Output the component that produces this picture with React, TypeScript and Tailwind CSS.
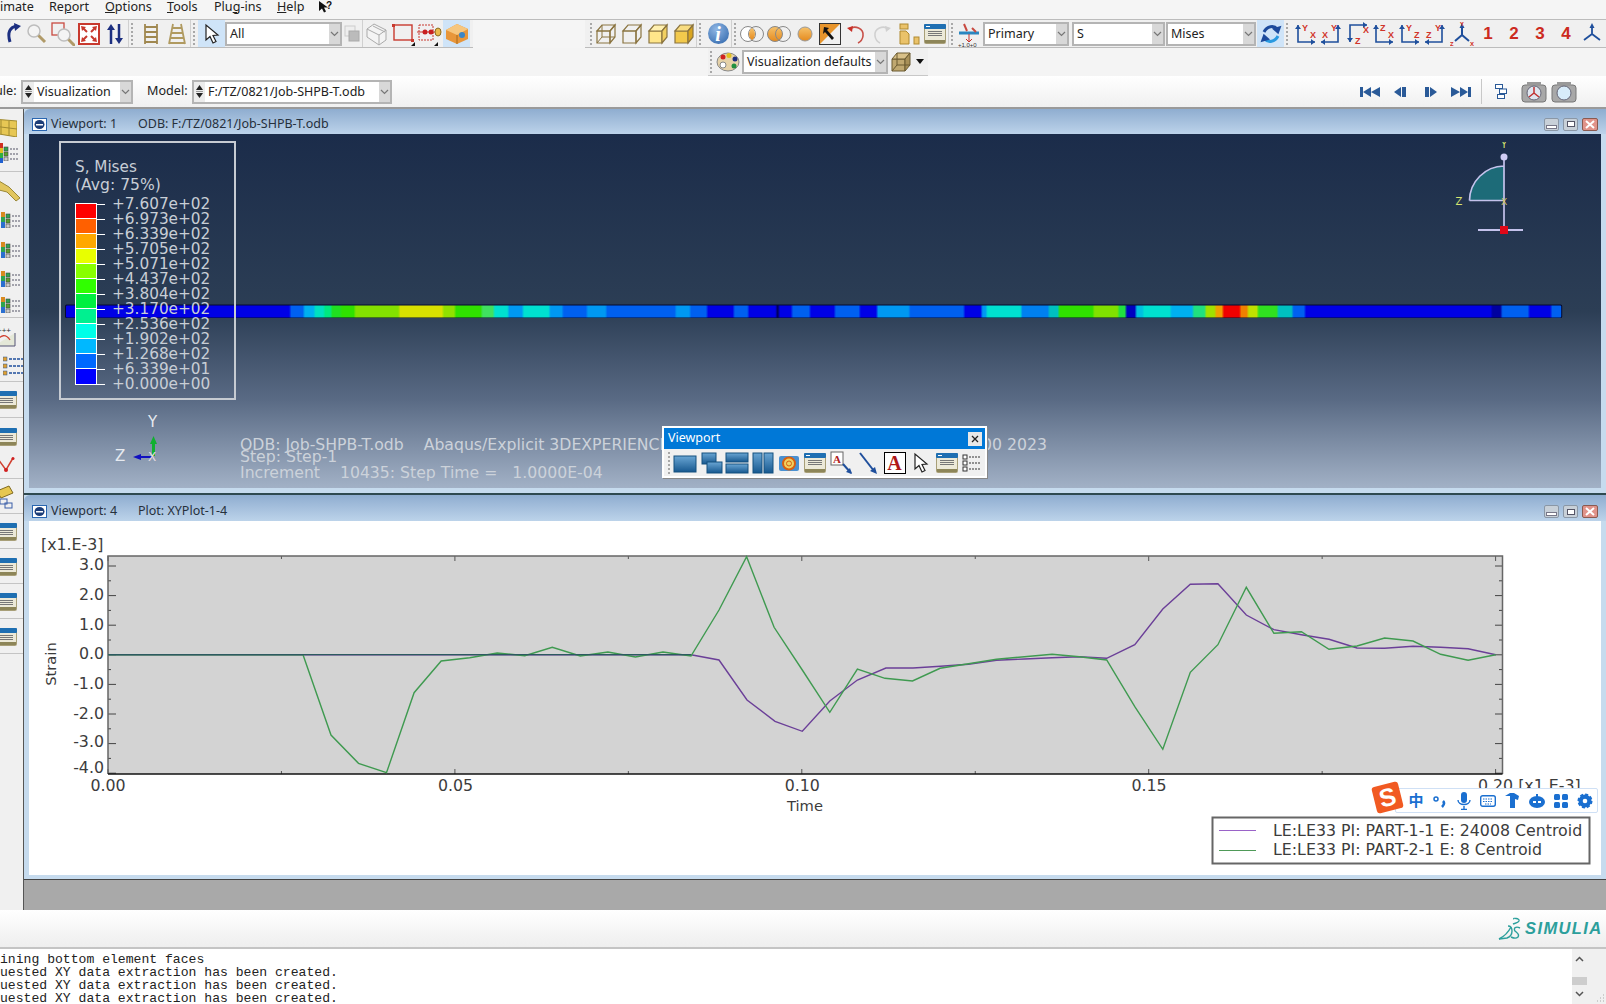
import React from "react";

const Svg = ({ w = 24, h = 24, children, className = "" }: { w?: number; h?: number; children?: React.ReactNode; className?: string }) => (
  <svg width={w} height={h} viewBox={`0 0 ${w} ${h}`} className={`shrink-0 ${className}`}>{children}</svg>
);

const Slot = ({ w = 26, children }: { w?: number; children?: React.ReactNode }) => (
  <div className="flex h-full shrink-0 items-center justify-center" style={{ width: w }}>{children}</div>
);

const Grip = () => (
  <div className="flex h-full w-[5px] shrink-0 flex-col items-center justify-center gap-[2px]">
    {[0, 1, 2, 3, 4, 5].map((i) => <span key={i} className="h-[2px] w-[2px] bg-[#a8a8a8]" />)}
  </div>
);
const Sep = () => <div className="h-full w-px shrink-0 bg-[#d0d0d0]" />;

const Combo = ({ w, text, spin = false }: { w: number; text: string; spin?: boolean }) => (
  <div className="flex h-[24px] shrink-0 items-stretch border-2 border-[#b4b4b4] bg-white" style={{ width: w }}>
    {spin && (
      <div className="flex w-[11px] shrink-0 flex-col items-center justify-center gap-[1px] bg-[#ececec]">
        <Svg w={7} h={5}><path d="M3.5 0L7 5H0z" fill="#222" /></Svg>
        <div className="h-px w-[7px] bg-[#999]" />
        <Svg w={7} h={5}><path d="M0 0h7L3.5 5z" fill="#222" /></Svg>
      </div>
    )}
    <span className="min-w-0 flex-1 truncate pl-[3px] text-[12.5px] leading-[20px] text-[#222]">{text}</span>
    <div className="flex w-[11px] shrink-0 items-center justify-center bg-[#d8d8d8]">
      <Svg w={9} h={6}><path d="M1 1l3.5 3.5L8 1" fill="none" stroke="#777" strokeWidth="1.2" /></Svg>
    </div>
  </div>
);

const Table = ({ w = 22, h = 18 }: { w?: number; h?: number }) => (
  <Svg w={w} h={h}>
    <rect x="0.5" y="0.5" width={w - 1} height={h - 1} rx="1" fill="#ece9d8" stroke="#a89f78" />
    <rect x="0" y="0" width={w} height="5" rx="1" fill="#1f6fb2" />
    <rect x="2" y="2" width="4" height="1" fill="#fff" />
    {[7, 9, 11].map((y) => <rect key={y} x={4} y={y} width={w - 8} height="1" fill="#777" />)}
    <rect x="1" y={h - 4} width={w - 2} height="3" fill="#8d8558" />
  </Svg>
);

const Magnifier = ({ x = 0, y = 0 }: { x?: number; y?: number }) => (
  <g transform={`translate(${x} ${y})`}>
    <circle cx="8" cy="8" r="6" fill="#f4f4f4" stroke="#bdbdbd" strokeWidth="1.5" />
    <path d="M12.5 12.5L19 19" stroke="#b09a68" strokeWidth="3" />
  </g>
);

const Cube = ({ mode }: { mode: "wire" | "hidden" | "shade" | "solid" }) => {
  const s = "#8a7440";
  const f = mode === "shade" ? "#ffe68a" : mode === "solid" ? "#f2c94c" : "none";
  const t = mode === "shade" ? "#fff0b0" : mode === "solid" ? "#f8dc80" : "none";
  const r = mode === "shade" ? "#f2d060" : mode === "solid" ? "#d9a520" : "none";
  return (
    <Svg w={22} h={22}>
      <path d="M2 8h13v12H2z" fill={f} stroke={s} strokeWidth="1.2" />
      <path d="M2 8l5-6h13l-5 6z" fill={t} stroke={s} strokeWidth="1.2" />
      <path d="M15 8l5-6v12l-5 6z" fill={r} stroke={s} strokeWidth="1.2" />
      {mode === "wire" && <path d="M7 2v12h13M7 14l-5 6" fill="none" stroke={s} strokeWidth="1" />}
    </Svg>
  );
};

const Circles = ({ a = false, b = false }: { a?: boolean; b?: boolean }) => (
  <Svg w={26} h={18}>
    <defs>
      <linearGradient id="og" x1="0" y1="0" x2="0" y2="1"><stop offset="0" stopColor="#f6c26b" /><stop offset="1" stopColor="#e58a1e" /></linearGradient>
    </defs>
    <circle cx="9" cy="9" r="7.5" fill={a ? "url(#og)" : "#fff"} stroke="#888" />
    <circle cx="17" cy="9" r="7.5" fill={b ? "url(#og)" : "none"} stroke="#888" />
    {!a && !b && <path d="M13 3a7.5 7.5 0 010 12a7.5 7.5 0 010-12z" fill="url(#og)" />}
  </Svg>
);

const Axis = ({ a, b, mirror = false, down = false }: { a: string; b: string; mirror?: boolean; down?: boolean }) => {
  const vx = mirror ? 18 : 4;
  const ex = mirror ? 1 : 21;
  const top = 3;
  const bot = 20;
  const hy = down ? top : bot;
  const vy = down ? bot : top;
  const hd = mirror ? 1 : -1;
  const vd = down ? -1 : 1;
  return (
    <Svg w={24} h={24}>
      <path d={`M${vx} ${vy}V${hy}H${ex}`} fill="none" stroke="#1f4f9c" strokeWidth="1.6" />
      <path d={`M${vx - 3} ${vy + 4 * vd}L${vx} ${vy}L${vx + 3} ${vy + 4 * vd}z`} fill="#1f4f9c" />
      <path d={`M${ex + 4 * hd} ${hy - 3}L${ex} ${hy}L${ex + 4 * hd} ${hy + 3}z`} fill="#1f4f9c" />
      <text x={down ? 9 : mirror ? 11 : 8} y={down ? 22 : 9} fontSize="9" fontWeight="700" fill="#d0342a" fontFamily="Liberation Sans">{a}</text>
      <text x={mirror ? 2 : down ? 17 : 16} y={down ? 11 : 16} fontSize="9" fontWeight="700" fill="#d0342a" fontFamily="Liberation Sans">{b}</text>
    </Svg>
  );
};

const Tri = ({ size = 24 }: { size?: number }) => (
  <Svg w={size} h={size} className="overflow-visible">
    <path d="M12 12V3M12 12L4 18M12 12l8 6" stroke="#1f4f9c" strokeWidth="1.8" fill="none" />
    <path d="M9.5 6L12 1l2.5 5z" fill="#1f4f9c" />
  </Svg>
);

const Num = ({ n }: { n: string }) => (
  <Slot w={26}><span className="font-['Liberation_Sans'] text-[17px] font-bold text-[#cc2a20]">{n}</span></Slot>
);

const WinBtns = () => (
  <div className="flex items-center gap-[4px]">
    <div className="flex h-[13px] w-[15px] items-end justify-center rounded-[2px] border border-[#8a97a6] bg-[#c8d0d8] pb-[2px]"><span className="h-[2px] w-[9px] bg-[#fff] outline outline-1 outline-[#778]" /></div>
    <div className="flex h-[13px] w-[15px] items-center justify-center rounded-[2px] border border-[#8a97a6] bg-[#c8d0d8]"><span className="h-[6px] w-[8px] border border-[#556] bg-white" /></div>
    <div className="flex h-[13px] w-[16px] items-center justify-center rounded-[2px] border border-[#8a5a50] bg-[#e0938a]">
      <Svg w={10} h={9}><path d="M1 1l8 7M9 1L1 8" stroke="#fff" strokeWidth="2" /></Svg>
    </div>
  </div>
);

const TitleIcon = () => (
  <div className="flex h-[13px] w-[15px] shrink-0 items-center justify-center border border-[#2a66b0] bg-white">
    <Svg w={11} h={9}><ellipse cx="5.5" cy="4.5" rx="5" ry="4.5" fill="#1c3d78" /><rect x="2" y="4" width="7" height="1.5" fill="#fff" /></Svg>
  </div>
);

const TitleBar = ({ a, b, h, pt }: { a: string; b: string; h: number; pt: number }) => (
  <div className="flex shrink-0 items-center rounded-tl-[6px] bg-[linear-gradient(180deg,#8fadd0,#bcd3ea)] pr-[8px] pl-[8px] text-[12.5px] text-[#26303c]" style={{ height: h, paddingTop: pt }}>
    <TitleIcon />
    <span className="ml-[4px] w-[87px] shrink-0">{a}</span>
    <span className="flex-1">{b}</span>
    <WinBtns />
  </div>
);

const Cursor = () => (
  <Svg w={18} h={22}><path d="M3 2l0 15 4-3.5 3 6.5 3-1.5-3-6 5-.5z" fill="#fff" stroke="#222" strokeWidth="1.2" /></Svg>
);

const LegendMini = ({ colors = ["#2ea44f", "#5aa02c", "#ccc"] }: { colors?: string[] }) => (
  <Svg w={16} h={16}>
    {colors.map((c, i) => (
      <g key={i}>
        <rect x="1" y={2 + i * 5} width="4" height="4" fill={c} stroke="#444" strokeWidth=".6" />
        <path d={`M7 ${4 + i * 5}h8`} stroke="#556" strokeDasharray="2 1" />
      </g>
    ))}
  </Svg>
);

const YellowPart = () => (
  <Svg w={24} h={24}><path d="M0 3l10 6 11 11-4 3-9-9L0 12z" fill="#e2c65e" stroke="#9a8838" /></Svg>
);

const LeftIcon = ({ kind }: { kind: string }) => {
  if (kind === "table") return <div className="mr-[6px] flex justify-end"><Table w={24} h={18} /></div>;
  if (kind === "grid")
    return (
      <div className="mr-[6px] flex justify-end">
        <Svg w={24} h={20}><path d="M0 2l24 2v16L0 16z" fill="#e7c754" stroke="#a08a30" /><path d="M8 3v14M16 4v15M0 9l24 3" stroke="#a08a30" /></Svg>
      </div>
    );
  if (kind === "part") return <div className="flex justify-end"><YellowPart /></div>;
  if (kind === "bars")
    return (
      <div className="mr-[2px] flex items-center justify-end">
        <Svg w={4} h={16}><rect width="4" height="5" fill="#d88a20" /><rect y="5" width="4" height="5" fill="#2ea44f" /><rect y="10" width="4" height="6" fill="#2a6fd0" /></Svg>
        <LegendMini />
      </div>
    );
  if (kind === "plot")
    return (
      <div className="mr-[6px] flex justify-end">
        <Svg w={24} h={22}><path d="M1 20h21V7" fill="#e4e8d8" stroke="#557" /><path d="M3 16c5-8 10-8 14-2" fill="none" stroke="#d04030" strokeWidth="1.3" /><text x="4" y="7" fontSize="8" fill="#333" fontFamily="Liberation Sans">+++</text></Svg>
      </div>
    );
  if (kind === "list")
    return (
      <div className="flex justify-end">
        <Svg w={20} h={22}>
          {[3, 10, 17].map((y) => (
            <g key={y}><rect x="0" y={y - 2} width="4" height="4" fill="#e0a030" stroke="#1f4f9c" strokeWidth=".5" /><path d={`M6 ${y}h14`} stroke="#1f4f9c" strokeWidth="1.5" strokeDasharray="3 1" /></g>
          ))}
        </Svg>
      </div>
    );
  if (kind === "vee")
    return (
      <div className="mr-[5px] flex justify-end">
        <Svg w={20} h={16}><path d="M0 2l8 11 7-12" fill="none" stroke="#d04030" strokeWidth="1.5" /><circle cx="8" cy="13" r="2" fill="#d02020" /><circle cx="0" cy="2" r="2" fill="#d02020" /><circle cx="15" cy="1.5" r="1.5" fill="#d02020" /></Svg>
      </div>
    );
  if (kind === "stack")
    return (
      <div className="mr-[6px] flex justify-end">
        <Svg w={20} h={24}><path d="M0 6l12-5 4 7-12 5z" fill="#e6c750" stroke="#806a20" /><rect x="3" y="14" width="7" height="5" fill="none" stroke="#3a5ea8" /><rect x="8" y="18" width="7" height="5" fill="none" stroke="#3a5ea8" /></Svg>
      </div>
    );
  if (kind === "color")
    return (
      <div className="mr-[4px] flex items-center justify-end">
        <Svg w={5} h={20}><rect width="5" height="5" fill="#d03020" /><rect y="5" width="5" height="5" fill="#e0c020" /><rect y="10" width="5" height="5" fill="#30b040" /><rect y="15" width="5" height="5" fill="#2060d0" /></Svg>
        <LegendMini />
      </div>
    );
  return null;
};

const sections: { h: number; pt: number; items: [string, number][] }[] = [
  { h: 63, pt: 3, items: [["grid", 30], ["color", 22]] },
  { h: 146, pt: 3, items: [["part", 30], ["bars", 30], ["bars", 30], ["bars", 27], ["bars", 26]] },
  { h: 64, pt: 4, items: [["plot", 30], ["list", 30]] },
  { h: 36, pt: 0, items: [["table", 36]] },
  { h: 61, pt: 4, items: [["table", 30], ["vee", 26]] },
  { h: 35, pt: 0, items: [["stack", 35]] },
  { h: 35, pt: 0, items: [["table", 35]] },
  { h: 35, pt: 0, items: [["table", 35]] },
  { h: 35, pt: 0, items: [["table", 35]] },
  { h: 35, pt: 0, items: [["table", 35]] },
];

const LeftBar = () => (
  <div className="flex h-full w-[23px] shrink-0 flex-col overflow-hidden bg-[#f0f0f0]">
    {sections.map((s, i) => (
      <div key={i} className="flex shrink-0 flex-col border-b border-[#c4c4c4]" style={{ height: s.h, paddingTop: s.pt }}>
        {s.items.map(([k, h], j) => (
          <div key={j} className="flex shrink-0 items-center justify-end" style={{ height: h }}><LeftIcon kind={k} /></div>
        ))}
      </div>
    ))}
  </div>
);

const legendValues = ["+7.607e+02", "+6.973e+02", "+6.339e+02", "+5.705e+02", "+5.071e+02", "+4.437e+02", "+3.804e+02", "+3.170e+02", "+2.536e+02", "+1.902e+02", "+1.268e+02", "+6.339e+01", "+0.000e+00"];
const legendColors = ["#ff0000", "#ff6000", "#ffa800", "#e8ff00", "#88ff00", "#30ff00", "#00f040", "#00f090", "#00ffe8", "#00b8ff", "#0068ff", "#0000ff"];

const ContourLegend = () => (
  <div className="absolute top-[7px] left-[30px] z-10 h-[259px] w-[177px] border-2 border-[#c6cbd2] pt-[15px] pl-[14px] font-['DejaVu_Sans'] text-[#c8ced6]">
    <div className="text-[15.2px] leading-[18px]">S, Mises</div>
    <div className="text-[15.6px] leading-[18px]">(Avg: 75%)</div>
    <div className="mt-[3px] flex">
      <div className="mt-[6px] flex w-[22px] shrink-0 flex-col self-start border border-white">
        {legendColors.map((c) => <div key={c} className="h-[15px] border-b border-white last:border-b-0" style={{ backgroundColor: c }} />)}
      </div>
      <div className="flex flex-col">
        {legendValues.map((v) => (
          <div key={v} className="flex h-[15.02px] items-center">
            <span className="h-px w-[8px] bg-white" />
            <span className="ml-[7px] text-[15.3px] leading-[15px]">{v}</span>
          </div>
        ))}
      </div>
    </div>
  </div>
);

const B = "#0000e6";
const M = "#0060f0";
const L = "#0098f2";
const C = "#00e0d0";
const seg1: [number, string][] = [[475, B], [503, M], [525, "#00b0f0"], [545, "#00e0c0"], [560, "#00e880"], [580, "#20e020"], [608, "#30e000"], [700, "#84e000"], [790, "#d8e000"], [815, "#90e000"], [870, "#30e000"], [895, "#40e060"], [925, C], [955, L], [1010, C], [1037, L], [1087, M], [1127, L], [1270, M], [1300, L], [1335, M], [1350, B], [1390, B], [1420, M], [1478, B], [1483, "#000060"], [1510, B], [1540, M], [1568, B]];
const seg2: [number, string][] = [[20, M], [70, B], [120, M], [155, B], [220, L], [240, M], [330, M], [365, B], [375, L], [445, C], [500, "#0080f0"], [520, "#00c0c0"], [590, "#30e000"], [640, "#80e000"], [655, "#20e040"], [675, "#0000c0"], [690, "#00c0e0"], [745, C], [790, "#00b0f0"], [815, "#20e080"], [835, "#a0e000"], [850, "#f0a000"], [885, "#f00000"], [900, "#f08000"], [920, "#c0e000"], [960, "#30e020"], [990, "#00c0c0"], [1015, M], [1390, B], [1410, "#0000a0"], [1465, M], [1510, B], [1530, M]];

const Strip = () => {
  const x0 = 66;
  const x1 = 800 + 1530 / 2.01;
  const stops: { o: number; c: string }[] = [];
  let prev = x0;
  const add = (x: number, c: string) => {
    if (x <= prev) return;
    const e = Math.min(1.2, (x - prev) / 2.5);
    stops.push({ o: (prev + e - x0) / (x1 - x0), c });
    stops.push({ o: (x - e - x0) / (x1 - x0), c });
    prev = x;
  };
  seg1.forEach(([e, c]) => add(Math.min(60 + e / 2.063, 800), c));
  seg2.forEach(([e, c]) => add(800 + e / 2.01, c));
  return (
    <svg className="absolute top-[169px] left-0" width={1572} height={18} viewBox="29 303 1572 18">
      <defs>
        <linearGradient id="stripG" x1="0" y1="0" x2="1" y2="0">
          {stops.map((s, i) => <stop key={i} offset={s.o} stopColor={s.c} />)}
        </linearGradient>
      </defs>
      <rect x="65" y="304.5" width={x1 - 65 + 1} height="13.5" fill="#050a30" rx="1.5" />
      <rect x={x0} y={305.5} width={x1 - x0} height={12} fill="url(#stripG)" rx="1" />
    </svg>
  );
};

const TopTriad = () => (
  <svg className="absolute top-[8px] left-[1419px]" width={90} height={100} viewBox="1448 142 90 100">
    <path d="M1504 200.500V166A35 35 0 001469.500 200.500z" fill="#1d6b78" />
    <path d="M1469.500 200.500A35 35 0 011504 166M1469.500 200.500H1504M1504 157V230" fill="none" stroke="#c4c2ec" strokeWidth="1.7" />
    <circle cx="1504" cy="157" r="3.500" fill="#d0ccf4" />
    <path d="M1478 230H1523" stroke="#c4c2ec" strokeWidth="2" />
    <rect x="1500" y="226" width="8" height="8" fill="#e00818" />
    <text x="1504" y="148" fontSize="10" textAnchor="middle" fill="#d8e470" fontFamily="DejaVu Sans">Y</text>
    <text x="1459" y="204.500" fontSize="10" textAnchor="middle" fill="#d8e470" fontFamily="DejaVu Sans">Z</text>
    <text x="1504" y="204.500" fontSize="9" textAnchor="middle" fill="#d8c860" fontFamily="DejaVu Sans">X</text>
  </svg>
);

const BottomTriad = () => (
  <svg className="absolute top-[272px] left-[79px]" width={70} height={60} viewBox="108 406 70 60">
    <text x="148" y="427" fontSize="15" fill="#e6eaf0" fontFamily="DejaVu Sans">Y</text>
    <text x="115" y="461" fontSize="15" fill="#e6eaf0" fontFamily="DejaVu Sans">Z</text>
    <path d="M153.5 456V442" stroke="#10b030" strokeWidth="3" />
    <path d="M150 444l3.5-8 3.5 8z" fill="#10b030" />
    <path d="M153 457H140" stroke="#1010c0" strokeWidth="2" />
    <path d="M141 454l-8 3 8 3z" fill="#1010c0" />
    <text x="148" y="461" fontSize="12" fill="#e8dce0" fontFamily="DejaVu Sans">X</text>
  </svg>
);

const z = (pts: [number, number][], x0: number) => pts.map(([x, y]) => [x0 + x * 0.4592, 550 + y / 3] as [number, number]);
const green = [
  ...z([[18, 314], [442, 314], [503, 555], [563, 640], [624, 668], [684, 428], [743, 333], [805, 323], [865, 309], [925, 317], [985, 292], [1046, 318], [1106, 306], [1166, 321], [1226, 306], [1287, 318], [1348, 180], [1408, 20], [1468, 232]], 100),
  ...z([[5, 360], [65, 487], [125, 357], [185, 385], [245, 393], [305, 355], [367, 341], [428, 328], [489, 320], [549, 313], [608, 320], [668, 330], [729, 470], [790, 598], [850, 367], [910, 284], [972, 112], [1032, 250], [1092, 245], [1152, 298], [1213, 288], [1273, 264], [1335, 273], [1395, 313], [1455, 331], [1515, 314]], 800),
];
const purple = [
  ...z([[18, 314], [1287, 314], [1348, 330], [1409, 450], [1470, 514]], 100),
  ...z([[5, 544], [65, 453], [125, 390], [187, 354], [246, 354], [306, 349], [367, 343], [428, 331], [489, 327], [549, 323], [608, 320], [668, 325], [729, 284], [790, 177], [850, 103], [910, 101], [972, 195], [1032, 239], [1092, 254], [1152, 268], [1213, 294], [1273, 295], [1335, 289], [1395, 292], [1455, 296], [1515, 314]], 800),
];
const pl = (p: [number, number][]) => p.map(([x, y]) => `${x.toFixed(1)},${y.toFixed(1)}`).join(" ");

const yLabels: [string, number][] = [["3.0", 564], ["2.0", 594], ["1.0", 624], ["0.0", 653], ["-1.0", 683], ["-2.0", 713], ["-3.0", 741.5], ["-4.0", 767]];
const xMajor = [108, 455.6, 802.3, 1149, 1495.6];
const txt = "#3c3c3c";

const Chart = () => {
  const xt: number[] = [];
  for (let i = 0; i <= 8; i++) xt.push(108 + i * 173.45);
  const yt: number[] = [];
  for (let i = 0; i <= 14; i++) yt.push(566 + i * 14.8);
  return (
    <svg className="block h-[354px] w-full" viewBox="29 521 1572 354" fontFamily="DejaVu Sans" fontSize="15.8" fill={txt}>
      <rect x="108" y="556" width="1394.5" height="218" fill="#d3d3d3" />
      {xt.map((x, i) => (
        <g key={x} stroke="#555" strokeWidth="1">
          <path d={`M${x} 556v${i % 2 ? 3 : 5}M${x} 774v-${i % 2 ? 3 : 5}`} />
        </g>
      ))}
      {yt.map((y, i) => (
        <path key={y} d={`M108 ${y}h${i % 2 ? 3 : 8}M1502 ${y}h-${i % 2 ? 3 : 7}`} stroke="#444" strokeWidth="1" />
      ))}
      <path d="M108 774V556H1502.5V774" fill="none" stroke="#666" strokeWidth="1.5" />
      <path d="M108 774H1502.5" stroke="#111" strokeWidth="1.5" />
      <polyline points={pl(purple)} fill="none" stroke="#6b3f98" strokeWidth="1.4" />
      <polyline points={pl(green)} fill="none" stroke="#3f9a50" strokeWidth="1.4" />
      <polyline points={pl(purple.slice(0, 2))} fill="none" stroke="#2c5a60" strokeWidth="1.2" />
      <text x="41" y="550">[x1.E-3]</text>
      {yLabels.map(([t, y]) => <text key={t} x="104" y={y + 5.5} textAnchor="end">{t}</text>)}
      {["0.00", "0.05", "0.10", "0.15"].map((t, i) => <text key={t} x={xMajor[i]} y="791" textAnchor="middle">{t}</text>)}
      <text x="1478" y="791">0.20 [x1.E-3]</text>
      <text x="805" y="811" textAnchor="middle" fontSize="14.7">Time</text>
      <text transform="translate(56 664) rotate(-90)" textAnchor="middle" fontSize="14.7">Strain</text>
      <rect x="1212.5" y="817.5" width="377" height="46" fill="#fff" stroke="#666" strokeWidth="2" />
      <path d="M1219 830.5h37" stroke="#9a63c8" />
      <path d="M1219 850.5h37" stroke="#4f9a58" />
      <text x="1273" y="835.5">LE:LE33 PI: PART-1-1 E: 24008 Centroid</text>
      <text x="1273" y="854.5">LE:LE33 PI: PART-2-1 E: 8 Centroid</text>
    </svg>
  );
};

const PanelIcon = ({ k }: { k: number }) => {
  const g = "#17588f";
  return (
    <Svg w={24} h={22}>
      <defs><linearGradient id="pb" x1="0" y1="0" x2="0" y2="1"><stop offset="0" stopColor="#6aa6d4" /><stop offset="1" stopColor={g} /></linearGradient></defs>
      {k === 0 && <rect x="1" y="4" width="22" height="16" fill="url(#pb)" stroke="#14507f" />}
      {k === 1 && <g><rect x="3" y="1" width="14" height="11" fill="url(#pb)" stroke="#14507f" /><rect x="8" y="10" width="15" height="11" fill="url(#pb)" stroke="#14507f" /></g>}
      {k === 2 && <g><rect x="1" y="1" width="22" height="9" fill="url(#pb)" stroke="#14507f" /><rect x="1" y="12" width="22" height="9" fill="url(#pb)" stroke="#14507f" /></g>}
      {k === 3 && <g><rect x="2" y="1" width="9" height="20" fill="url(#pb)" stroke="#14507f" /><rect x="13" y="1" width="9" height="20" fill="url(#pb)" stroke="#14507f" /></g>}
    </Svg>
  );
};

const ViewportToolbar = () => (
  <div className="absolute top-[292px] left-[633px] z-20 w-[325px] border-2 border-white bg-[#f0f0f0] shadow-[1px_1px_0_#888]">
    <div className="flex h-[21px] items-center justify-between bg-[#0078d7] pr-[3px] pl-[4px] text-[12.5px] text-white">
      <span>Viewport</span>
      <span className="flex h-[14px] w-[14px] items-center justify-center bg-[#e8e8e8]">
        <Svg w={8} h={8}><path d="M1 1l6 6M7 1L1 7" stroke="#222" strokeWidth="1.3" /></Svg>
      </span>
    </div>
    <div className="flex h-[27px] items-center pl-[2px]">
      <Grip />
      <Slot w={27}><PanelIcon k={0} /></Slot>
      <Slot w={26}><PanelIcon k={1} /></Slot>
      <Slot w={26}><PanelIcon k={2} /></Slot>
      <Slot w={25}><PanelIcon k={3} /></Slot>
      <Slot w={27}>
        <Svg w={22} h={20}><rect x="1" y="3" width="20" height="15" rx="2" fill="#4a90d0" /><circle cx="11" cy="10.5" r="6" fill="#f0d060" stroke="#d86010" strokeWidth="2" /><circle cx="11" cy="10.5" r="2.5" fill="none" stroke="#d86010" /></Svg>
      </Slot>
      <Slot w={26}><Table w={22} h={20} /></Slot>
      <Slot w={27}>
        <Svg w={24} h={24}><rect x="1" y="1" width="12" height="13" fill="#fff" stroke="#666" /><text x="3" y="12" fontSize="11" fontWeight="700" fill="#b02020" fontFamily="Liberation Serif">A</text><path d="M13 13l8 9" stroke="#1f4f9c" strokeWidth="2" /><path d="M22 23l-6-2 4-4z" fill="#1f4f9c" /></Svg>
      </Slot>
      <Slot w={26}><Svg w={22} h={24}><path d="M3 2l14 18" stroke="#1f4f9c" strokeWidth="2" /><path d="M20 23l-7-3 5-4z" fill="#1f4f9c" /></Svg></Slot>
      <Slot w={27}>
        <div className="flex h-[22px] w-[22px] items-center justify-center border border-black bg-white font-['Liberation_Serif'] text-[20px] font-bold leading-none text-[#b01818]">A</div>
      </Slot>
      <Slot w={26}><Cursor /></Slot>
      <Slot w={26}><Table w={22} h={20} /></Slot>
      <Slot w={24}>
        <Svg w={20} h={20}>{[4, 10, 16].map((y) => <g key={y}><rect x="1" y={y - 2} width="4" height="4" fill="#fff" stroke="#333" /><path d={`M7 ${y}h12`} stroke="#333" strokeDasharray="2 1" /></g>)}</Svg>
      </Slot>
    </div>
  </div>
);

const ImeBar = () => (
  <>
    <div className="absolute top-[788px] left-[1395px] z-20 flex h-[25px] w-[203px] items-center rounded-[2px] border border-[#cfe0f5] bg-white pl-[8px] text-[#1a6fd0]">
      <Slot w={24}><span className="font-['Noto_Sans_CJK_SC'] text-[15px] font-bold">中</span></Slot>
      <Slot w={24}><Svg w={14} h={14}><circle cx="3" cy="5" r="2" fill="none" stroke="#1a6fd0" strokeWidth="1.5" /><path d="M10 7c2 2 1 4-1 6" fill="none" stroke="#1a6fd0" strokeWidth="2.5" /></Svg></Slot>
      <Slot w={24}><Svg w={14} h={18}><rect x="4" y="0" width="6" height="11" rx="3" fill="#1a6fd0" /><path d="M1 8c0 6 12 6 12 0M7 14v4M4 17.5h6" fill="none" stroke="#1a6fd0" strokeWidth="1.4" /></Svg></Slot>
      <Slot w={24}><Svg w={16} h={12}><rect x=".7" y=".7" width="14.6" height="10.6" rx="2" fill="none" stroke="#1a6fd0" strokeWidth="1.4" /><path d="M3 4h10M3 6.5h10M5 9h6" stroke="#1a6fd0" strokeWidth="1.2" strokeDasharray="1.5 1" /></Svg></Slot>
      <Slot w={25}><Svg w={16} h={16}><path d="M0 3l5-3h4l5 3-1 4-3-1v9H5V3z" fill="#1a6fd0" /></Svg></Slot>
      <Slot w={24}><Svg w={16} h={14}><ellipse cx="8" cy="8" rx="8" ry="6" fill="#1a6fd0" /><rect x="4" y="7" width="3" height="2" fill="#fff" /><rect x="9" y="7" width="3" height="2" fill="#fff" /><rect x="7" y="0" width="2" height="3" fill="#1a6fd0" /></Svg></Slot>
      <Slot w={24}><Svg w={14} h={14}><rect width="6" height="6" rx="1.5" fill="#1a6fd0" /><rect x="8" width="6" height="6" rx="1.5" fill="#1a6fd0" /><rect y="8" width="6" height="6" rx="1.5" fill="#1a6fd0" /><rect x="8" y="8" width="6" height="6" rx="1.5" fill="#1a6fd0" /></Svg></Slot>
      <Slot w={24}><Svg w={16} h={16}><circle cx="8" cy="8" r="6.5" fill="#1a6fd0" stroke="#1a6fd0" strokeWidth="2" strokeDasharray="3 2" /><circle cx="8" cy="8" r="2.3" fill="#fff" /></Svg></Slot>
    </div>
    <div className="absolute top-[784px] left-[1374px] z-30 flex h-[27px] w-[27px] -rotate-[14deg] items-center justify-center rounded-[3px] bg-[#f15a22] font-['Liberation_Sans'] text-[25px] font-black leading-none text-white">S</div>
  </>
);

const Simulia = () => (
  <div className="flex w-[108px] shrink-0 items-center overflow-hidden text-[#2c9f9c]">
    <Svg w={24} h={24}>
      <path d="M1 22c6-3 9-6 12-12M16 2c-2-1 6-1 5 2-1 2-4 2-6 3" fill="none" stroke="#2c9f9c" strokeWidth="1.4" />
      <path d="M10 9c5 0 6 9-1 12l-8 1M22 11c-4-2-7 0-5 3 2 2 5 3 3 6-2 2-5 1-7 0" fill="none" stroke="#2c9f9c" strokeWidth="1.4" />
    </Svg>
    <span className="ml-[3px] font-['Liberation_Sans'] text-[16.5px] font-bold tracking-[1.4px] whitespace-nowrap italic">SIMULIA</span>
  </div>
);

const menu: [React.ReactNode, number][] = [
  ["imate", 49],
  [<>Re<u>p</u>ort</>, 56],
  [<><u>O</u>ptions</>, 62],
  [<><u>T</u>ools</>, 47],
  [<>Plu<u>g</u>-ins</>, 63],
  [<><u>H</u>elp</>, 41],
];

export default function App() {
  return (
    <div className="relative flex h-[1004px] w-[1606px] flex-col overflow-hidden bg-[#f2f2f2] font-['Noto_Sans'] text-[13px] text-[#222]">
      {/* menu */}
      <div className="flex h-[20px] shrink-0 items-center border-b border-[#bcbcbc] bg-[#f5f5f5] pb-[5px] text-[12.6px]">
        {menu.map(([m, w], i) => <div key={i} className="shrink-0" style={{ width: w }}>{m}</div>)}
        <Svg w={14} h={14}><path d="M1 1v10l3-2.500 2 4 2-1-2-4h4z" fill="#111" /><text x="8" y="9" fontSize="10" fontWeight="700" fill="#111" fontFamily="Liberation Sans">?</text></Svg>
      </div>

      {/* toolbar 1 */}
      <div className="flex h-[28px] shrink-0 bg-[#f5f5f5]">
        <div className="flex w-[190px] shrink-0 border-b border-[#bcbcbc] bg-[#f0f0f0]">
          <Slot w={24}><Svg w={18} h={22}><path d="M14 3C7 4 4 9 7 19" fill="none" stroke="#1c2f80" strokeWidth="3" /><path d="M11 0l7 3-6 5z" fill="#1c2f80" /></Svg></Slot>
          <Slot><Svg w={22} h={22}><Magnifier /></Svg></Slot>
          <Slot><Svg w={24} h={24}><rect x="1" y="1" width="12" height="12" fill="none" stroke="#c84a40" strokeWidth="1.3" /><Magnifier x={5} y={5} /></Svg></Slot>
          <Slot>
            <Svg w={22} h={22}><rect x="1" y="1" width="20" height="20" fill="#fff" stroke="#c8392e" strokeWidth="2" /><path d="M3 3l5 1-4 4zM19 3l-1 5-4-4zM3 19l1-5 4 4zM19 19l-5-1 4-4z" fill="#c8392e" /><path d="M5 5l4 4M17 5l-4 4M5 17l4-4M17 17l-4-4" stroke="#c8392e" strokeWidth="2" /></Svg>
          </Slot>
          <Slot><Svg w={18} h={22}><path d="M5 21V5M13 1v16" stroke="#1c2f80" strokeWidth="2.5" /><path d="M1 7l4-6 4 6zM9 15l4 6 4-6z" fill="#1c2f80" /></Svg></Slot>
          <Sep /><Grip />
          <div className="w-[5px]" />
          <Slot><Svg w={16} h={22}><path d="M2 1v20M14 1v20M2 4h12M2 9h12M2 14h12M2 19h12" stroke="#a08850" strokeWidth="1.8" /></Svg></Slot>
          <Slot><Svg w={18} h={22}><path d="M5 1L1 21M13 1l4 20M4 5h10M3 10h12M2 15h14M1 20h16" stroke="#b09a60" strokeWidth="1.8" /></Svg></Slot>
        </div>
        <div className="flex w-[283px] shrink-0 border-b border-[#bcbcbc] bg-[#f0f0f0]">
          <Sep /><Grip />
          <div className="w-[2px] shrink-0" />
          <div className="flex w-[27px] shrink-0 items-center justify-center bg-[#cfe4f8]"><Cursor /></div>
          <div className="w-[117px] shrink-0 pt-[2px]"><Combo w={117} text="All" /></div>
          <Slot w={20}><Svg w={16} h={18}><rect x="1" y="1" width="10" height="10" fill="#eee" stroke="#ccc" /><rect x="5" y="6" width="10" height="10" fill="#bbb" stroke="#aaa" /></Svg></Slot>
          <Sep />
          <Slot w={28}><Svg w={24} h={24}><path d="M2 7l7-5 12 6v10l-7 5L2 15z" fill="#f4f4f4" stroke="#aaa" /><path d="M2 7l12 6v10M14 13l7-5M8 4l12 6" fill="none" stroke="#aaa" /></Svg></Slot>
          <Slot w={25}><Svg w={24} h={24}><rect x="2" y="3" width="18" height="15" fill="none" stroke="#c8392e" strokeWidth="1.4" /><rect x="0" y="2" width="3" height="3" fill="#c8392e" /><rect x="19" y="17" width="3" height="3" fill="#c8392e" /><path d="M19 24l4-4v4z" fill="#111" /></Svg></Slot>
          <Slot w={27}><Svg w={26} h={24}><rect x="2" y="3" width="14" height="15" fill="none" stroke="#c8392e" strokeDasharray="2 1" /><path d="M0 10h20" stroke="#c8392e" /><circle cx="8" cy="10" r="2.5" fill="#c82020" /><circle cx="14" cy="10" r="2.5" fill="#c82020" /><ellipse cx="21" cy="10" rx="3" ry="4" fill="#eab94a" stroke="#8a6a20" /><path d="M17 24l4-4v4z" fill="#111" /></Svg></Slot>
          <div className="flex w-[27px] shrink-0 items-center justify-center bg-[#cfe4f8]">
            <Svg w={24} h={22}><path d="M1 7l11-6 11 5v10l-11 5-11-5z" fill="#e8963a" /><path d="M1 7l11 5 11-6-11-5z" fill="#f6c67e" /><path d="M12 12v9" stroke="#a86818" /><circle cx="17" cy="12" r="3" fill="#3a86c8" /></Svg>
          </div>
        </div>
        <div className="w-[112px] shrink-0" />
        <div className="flex min-w-0 flex-1 border-b border-[#bcbcbc] bg-[#f0f0f0]">
          <div className="w-[3px] shrink-0" /><Grip />
          <Slot w={26}><Cube mode="wire" /></Slot>
          <Slot w={26}><Cube mode="hidden" /></Slot>
          <Slot w={26}><Cube mode="shade" /></Slot>
          <Slot w={25}><Cube mode="solid" /></Slot>
          <Sep /><Grip />
          <div className="w-[3px] shrink-0" />
          <Slot w={26}>
            <div className="flex h-[21px] w-[21px] items-center justify-center rounded-full bg-[radial-gradient(circle_at_40%_30%,#8fb6e4,#2a62a8)] font-['Liberation_Serif'] text-[20px] font-bold leading-none text-white italic">i</div>
          </Slot>
          <Sep /><Grip />
          <div className="w-[2px] shrink-0" />
          <Slot w={26}><Circles a={false} b={false} /></Slot>
          <Slot w={27}><Circles a /></Slot>
          <Slot w={25}><Svg w={16} h={16}><circle cx="8" cy="8" r="7" fill="url(#og)" stroke="#999" /></Svg></Slot>
          <Slot w={26}><Svg w={22} h={22}><rect x=".5" y=".5" width="21" height="21" fill="#f0f0f0" stroke="#333" /><path d="M1 21V1h20z" fill="#e8952c" /><path d="M5 4l-1 7 2-2 7 8 2-2-7-8 2-2z" fill="#111" /></Svg></Slot>
          <Slot w={26}><Svg w={20} h={20}><path d="M3 5c6-4 15-1 14 7-.5 4-3 6-5 7" fill="none" stroke="#c85048" strokeWidth="1.6" /><path d="M1 4l6-2-1 6z" fill="#c83028" /></Svg></Slot>
          <Slot w={26}><Svg w={20} h={20}><path d="M17 5C11 1 2 4 3 12c.5 4 3 6 5 7" fill="none" stroke="#d0d0d0" strokeWidth="1.6" /><path d="M19 4l-6-2 1 6z" fill="#d0d0d0" /></Svg></Slot>
          <Slot w={27}><Svg w={22} h={22}><rect x="2" y="1" width="8" height="5" fill="#eac26a" stroke="#b08a30" /><path d="M2 8h6l3 3v10H2z" fill="#eac26a" stroke="#b08a30" /><rect x="16" y="14" width="5" height="7" fill="#eac26a" stroke="#b08a30" /></Svg></Slot>
          <Slot w={26}><Table w={22} h={20} /></Slot>
          <Sep /><Grip />
          <div className="w-[3px] shrink-0" />
          <Slot w={26}><Svg w={24} h={26}><path d="M1 12h20" stroke="#2a86c0" strokeWidth="3" /><path d="M6 3l3 7M14 7l4 4" stroke="#c84a40" strokeWidth="2" /><path d="M11 13v7M8 18l3 3 3-3" fill="none" stroke="#c83028" /><text x="0" y="26" fontSize="6" fill="#333" fontFamily="Liberation Sans">+1.0+0</text></Svg></Slot>
          <div className="flex w-[86px] shrink-0 items-center"><Combo w={86} text="Primary" /></div>
          <div className="w-[3px] shrink-0" />
          <div className="flex w-[93px] shrink-0 items-center"><Combo w={93} text="S" /></div>
          <div className="w-px shrink-0" />
          <div className="flex w-[90px] shrink-0 items-center"><Combo w={90} text="Mises" /></div>
          <div className="w-px shrink-0" />
          <div className="flex w-[27px] shrink-0 items-center justify-center bg-[#cfe4f8]">
            <Svg w={22} h={22}><path d="M4 9c3-6 10-7 13-3" fill="none" stroke="#1c4a9c" strokeWidth="3" /><path d="M20 1v9l-8-3z" fill="#1c4a9c" transform="rotate(20 16 6)" /><path d="M18 13c-3 6-10 7-13 3" fill="none" stroke="#2a9ae0" strokeWidth="3" /><path d="M2 21v-9l8 3z" fill="#1c4a9c" transform="rotate(20 6 16)" /></Svg>
          </div>
          <Grip />
          <div className="w-[4px] shrink-0" />
          <Slot w={26}><Axis a="Y" b="X" /></Slot>
          <Slot w={26}><Axis a="Y" b="X" mirror /></Slot>
          <Slot w={26}><Axis a="Z" b="X" down /></Slot>
          <Slot w={26}><Axis a="Z" b="X" /></Slot>
          <Slot w={26}><Axis a="Y" b="Z" /></Slot>
          <Slot w={26}><Axis a="Y" b="Z" mirror /></Slot>
          <Slot w={26}>
            <Svg w={24} h={26}><path d="M12 14V5M12 14l-7 6M12 14l7 6" stroke="#1f4f9c" strokeWidth="2" fill="none" /><path d="M9.500 7L12 2l2.500 5z" fill="#1f4f9c" /><text x="10" y="5" fontSize="6" fontWeight="700" fill="#d0342a">Y</text><text x="0" y="25" fontSize="6" fontWeight="700" fill="#d0342a">Z</text><text x="20" y="25" fontSize="6" fontWeight="700" fill="#d0342a">X</text></Svg>
          </Slot>
          <Num n="1" /><Num n="2" /><Num n="3" /><Num n="4" />
          <Slot w={24}><Svg w={22} h={24}><Tri size={22} /></Svg></Slot>
        </div>
      </div>

      {/* toolbar 2 */}
      <div className="flex h-[28px] shrink-0 bg-[#f4f4f4] pl-[708px]">
        <div className="flex w-[220px] border-b border-[#c8c8c8] bg-[#f0f0f0]">
          <Grip />
          <Slot w={29}><Svg w={24} h={22}><ellipse cx="12" cy="11" rx="11" ry="9" fill="#e6d2a8" stroke="#888" /><circle cx="7" cy="6" r="2.500" fill="#d02020" /><circle cx="13" cy="4.500" r="2.500" fill="#e0c020" /><circle cx="19" cy="8" r="2.500" fill="#1c2f80" /><circle cx="18" cy="15" r="2.500" fill="#209040" /><circle cx="7" cy="14" r="3" fill="#fff" stroke="#888" /></Svg></Slot>
          <div className="flex items-center"><Combo w={146} text="Visualization defaults" /></div>
          <Slot w={26}><Svg w={22} h={22}><path d="M2 8h13v12H2z" fill="#c0a870" stroke="#6a5a30" /><path d="M2 8l5-6h13l-5 6z" fill="#d8c088" stroke="#6a5a30" /><path d="M15 8l5-6v12l-5 6z" fill="#a89058" stroke="#6a5a30" /><path d="M7 2v12h13M7 14l-5 6" fill="none" stroke="#6a5a30" /></Svg></Slot>
          <Slot w={12}><Svg w={8} h={5}><path d="M0 0h8L4 5z" fill="#111" /></Svg></Slot>
        </div>
      </div>

      {/* module row */}
      <div className="flex h-[33px] shrink-0 items-center border-b-2 border-[#9a9a9a] bg-[linear-gradient(180deg,#ffffff,#f0f0f0)] pr-[27px] text-[12.6px]">
        <span className="ml-[-5px] w-[26px] shrink-0">ule:</span>
        <Combo w={112} text="Visualization" spin />
        <span className="ml-[14px] w-[45px] shrink-0">Model:</span>
        <Combo w={200} text="F:/TZ/0821/Job-SHPB-T.odb" spin />
        <div className="flex-1" />
        <div className="flex h-[26px] items-center">
          <Slot w={30}><Svg w={20} h={12}><rect y="1" width="3" height="10" fill="#2a5a98" /><path d="M11 1v10L3 6zM20 1v10l-9-5z" fill="#2a5a98" /></Svg></Slot>
          <Slot w={30}><Svg w={14} h={12}><path d="M8 1v10L1 6z" fill="#2a5a98" /><rect x="9" y="1" width="4" height="10" fill="#2a5a98" /></Svg></Slot>
          <Slot w={31}><Svg w={14} h={12}><rect x="1" y="1" width="4" height="10" fill="#2a5a98" /><path d="M6 1v10l7-5z" fill="#2a5a98" /></Svg></Slot>
          <Slot w={29}><Svg w={20} h={12}><path d="M0 1v10l9-5zM9 1v10l8-5z" fill="#2a5a98" /><rect x="17" y="1" width="3" height="10" fill="#2a5a98" /></Svg></Slot>
          <div className="ml-[6px] h-[25px] w-px bg-[#c8c8c8]" />
          <Slot w={37}><Svg w={12} h={15}><rect x=".5" y=".5" width="7" height="4" fill="#fff" stroke="#2a5a98" /><rect x="4.500" y="5" width="7" height="4.500" fill="#fff" stroke="#2a5a98" /><rect x="2.500" y="10.500" width="7" height="4" fill="#fff" stroke="#2a5a98" /></Svg></Slot>
          <Slot w={30}><Svg w={26} h={22}><rect x="1" y="4" width="24" height="17" rx="3" fill="#a8a8a8" stroke="#777" /><rect x="6" y="1" width="14" height="4" fill="#999" /><circle cx="13" cy="12" r="7" fill="#dfe6f0" stroke="#667" /><path d="M13 12V6M13 12l-5 4M13 12l5 4" stroke="#c03030" strokeWidth="1.500" /></Svg></Slot>
          <Slot w={30}><Svg w={26} h={22}><rect x="1" y="4" width="24" height="17" rx="3" fill="#a8a8a8" stroke="#777" /><rect x="6" y="1" width="14" height="4" fill="#999" /><circle cx="13" cy="12" r="7" fill="#d8ecfa" stroke="#667" /></Svg></Slot>
        </div>
      </div>

      {/* main */}
      <div className="flex h-[801px] shrink-0">
        <LeftBar />
        <div className="flex min-w-0 flex-1 flex-col border-l border-[#555] bg-[#a9a9a9]">
          <div className="flex h-[386px] shrink-0 flex-col border-b-2 border-[#2f4a50] bg-[#c6dbee]">
            <TitleBar a="Viewport: 1" b="ODB: F:/TZ/0821/Job-SHPB-T.odb" h={25} pt={5} />
            <div className="relative mx-[5px] h-[354px] shrink-0 overflow-hidden bg-[linear-gradient(180deg,#1b2c4a_0%,#2c3e55_50%,#596a84_75%,#a2b1c6_100%)]">
              <Strip />
              <ContourLegend />
              <TopTriad />
              <BottomTriad />
              <div className="absolute top-[304px] left-[211px] font-['DejaVu_Sans'] text-[15.7px] whitespace-pre text-[#ccd2da]">
                <div className="h-[12px] leading-[14px]">ODB: Job-SHPB-T.odb    Abaqus/Explicit 3DEXPERIENCE</div>
                <div className="h-[15px] leading-[14px]">Step: Step-1</div>
                <div className="leading-[15px]">Increment    10435: Step Time =   1.0000E-04</div>
              </div>
              <div className="absolute top-[304px] left-[953px] font-['DejaVu_Sans'] text-[15.7px] leading-[14px] whitespace-pre text-[#ccd2da]">00 2023</div>
              <ViewportToolbar />
            </div>
          </div>
          <div className="flex h-[385px] shrink-0 flex-col border-b border-[#444] bg-[#c6dbee]">
            <TitleBar a="Viewport: 4" b="Plot: XYPlot-1-4" h={26} pt={7} />
            <div className="mx-[5px] h-[354px] shrink-0 overflow-hidden bg-white"><Chart /></div>
          </div>
        </div>
      </div>

      {/* status */}
      <div className="flex h-[39px] shrink-0 items-center justify-end border-b-2 border-[#c4c4c4] bg-[linear-gradient(180deg,#ffffff,#eeeeee)]">
        <Simulia />
      </div>

      {/* messages */}
      <div className="flex min-h-0 flex-1">
        <div className="flex-1 overflow-hidden bg-white pt-[4px] font-['Liberation_Mono'] text-[13.1px] leading-[13px] font-medium whitespace-pre text-[#222]">
          <div>ining bottom element faces</div>
          <div>uested XY data extraction has been created.</div>
          <div>uested XY data extraction has been created.</div>
          <div>uested XY data extraction has been created.</div>
        </div>
        <div className="flex w-[15px] shrink-0 flex-col items-center bg-[#f0f0f0] pt-[7px]">
          <Svg w={9} h={6}><path d="M1 5l3.500-3.500L8 5" fill="none" stroke="#555" strokeWidth="1.5" /></Svg>
          <div className="mt-[15px] h-[8px] w-full bg-[#cdcdcd]" />
          <div className="mt-[6px]"><Svg w={9} h={6}><path d="M1 1l3.500 3.500L8 1" fill="none" stroke="#555" strokeWidth="1.5" /></Svg></div>
        </div>
        <div className="flex w-[19px] shrink-0 items-end justify-end bg-[#f0f0f0] pr-[1px] pb-[1px]">
          <Svg w={10} h={10}><path d="M8 2h1M5 5h1M8 5h1M2 8h1M5 8h1M8 8h1" stroke="#aaa" /></Svg>
        </div>
      </div>

      <ImeBar />
    </div>
  );
}
